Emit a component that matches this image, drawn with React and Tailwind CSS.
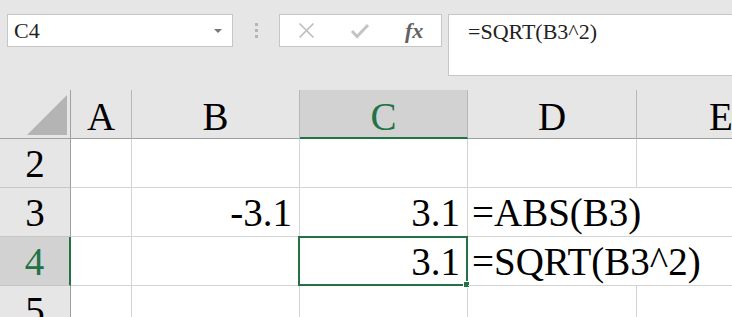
import React from "react";

const cols = ["A", "B", "C", "D", "E"];

const rows = [
  { n: 2, cells: {} },
  { n: 3, cells: { B: "-3.1", C: "3.1", D: "=ABS(B3)" } },
  { n: 4, cells: { C: "3.1", D: "=SQRT(B3^2)" } },
  { n: 5, cells: {} },
];

const selCol = "C";
const selRow = 4;

const Toolbar = () => (
  <div className="flex h-[90px] items-start pt-[14px]">
    {/* name box */}
    <div className="ml-[7px] flex h-[33px] w-[226px] items-center justify-between border border-[#c6c6c6] bg-white pl-[6px] pr-[10px]">
      <span className="text-[22px] leading-[24px] text-[#222]">C4</span>
      <div className="h-0 w-0 border-x-[4px] border-t-[4px] border-x-transparent border-t-[#777]" />
    </div>

    {/* dots */}
    <div className="flex h-[33px] w-[46px] flex-col items-center justify-center gap-[3px]">
      <div className="h-[3px] w-[3px] bg-[#b5b5b5]" />
      <div className="h-[3px] w-[3px] bg-[#b5b5b5]" />
      <div className="h-[3px] w-[3px] bg-[#b5b5b5]" />
    </div>

    {/* cancel / enter / fx */}
    <div className="grid h-[33px] w-[163px] grid-cols-3 items-center border border-[#c6c6c6] bg-white">
      <div className="flex justify-center">
        <svg width="17" height="17" viewBox="0 0 17 17">
          <path d="M1.5 1.5 L15.5 15.5 M15.5 1.5 L1.5 15.5" stroke="#bcbcbc" strokeWidth="1.6" fill="none" />
        </svg>
      </div>
      <div className="flex justify-center">
        <svg width="20" height="16" viewBox="0 0 20 16">
          <path d="M2 8 L7 13.5 L18 2" stroke="#c4c4c4" strokeWidth="3" fill="none" />
        </svg>
      </div>
      <div className="flex justify-center">
        <span className="text-[22px] font-bold italic leading-[24px] text-[#616161]">fx</span>
      </div>
    </div>

    {/* formula bar */}
    <div className="ml-[6px] h-[62px] flex-1 border border-r-0 border-[#c6c6c6] bg-white pl-[19px] pt-[5px]">
      <span className="text-[22px] leading-[24px] text-[#222]">=SQRT(B3^2)</span>
    </div>
  </div>
);

export default function App() {
  return (
    <div className="h-[317px] w-[732px] overflow-hidden bg-[#e6e6e6] font-['Liberation_Serif',serif]">
      <Toolbar />

      <div className="grid grid-cols-[71px_61px_168px_168px_169px_169px] grid-rows-[49px_49px_49px_49px_49px] bg-white text-[39px] text-black">
        {/* corner */}
        <div className="flex items-end justify-end border-b border-r border-b-[#a0a0a0] border-r-[#a0a0a0] bg-[#e6e6e6] pb-[3px] pr-[3px]">
          <div className="h-[40px] w-[40px] bg-[#b4b4b4] [clip-path:polygon(100%_0,100%_100%,0_100%)]" />
        </div>

        {/* column headers */}
        {cols.map((c) => {
          const sel = c === selCol;
          return (
            <div
              key={c}
              className={`overflow-hidden text-center leading-[54px] ${
                sel
                  ? "border-b-2 border-r border-b-[#217346] border-r-[#b8b8b8] bg-[#d2d2d2] text-[#217346]"
                  : "border-b border-r border-b-[#a0a0a0] border-r-[#b8b8b8] bg-[#e6e6e6]"
              }`}
            >
              {c}
            </div>
          );
        })}

        {/* rows */}
        {rows.map((r) => {
          const rowSel = r.n === selRow;
          return (
            <React.Fragment key={r.n}>
              <div
                className={`text-center leading-[50px] ${
                  rowSel
                    ? "border-b border-r-2 border-b-[#c6c6c6] border-r-[#217346] bg-[#d2d2d2] text-[#217346]"
                    : "border-b border-r border-b-[#c6c6c6] border-r-[#a0a0a0] bg-[#e6e6e6]"
                }`}
              >
                {r.n}
              </div>
              {cols.map((c) => {
                const v = r.cells[c];
                const isText = v && v.startsWith("=");
                const sel = rowSel && c === selCol;
                return (
                  <div
                    key={c}
                    className={`relative whitespace-nowrap border-b border-[#d4d4d4] leading-[50px] ${
                      isText ? "z-10 pl-[4px] text-left" : "border-r pr-[7px] text-right"
                    }`}
                  >
                    {v}
                    {sel && (
                      <div className="absolute -bottom-px -left-[2px] -right-px -top-px z-10 border-2 border-[#217346]">
                        <div className="absolute -bottom-[4px] -right-[4px] h-[7px] w-[7px] border border-white bg-[#217346]" />
                      </div>
                    )}
                  </div>
                );
              })}
            </React.Fragment>
          );
        })}
      </div>
    </div>
  );
}
